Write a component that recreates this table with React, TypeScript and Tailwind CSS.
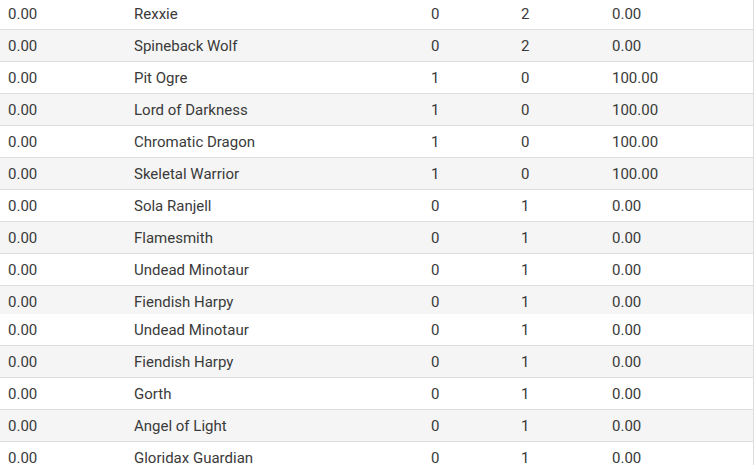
import React from "react";

type Row = [string, string, string, string, string];

const rowsA: Row[] = [
  ["0.00", "Rexxie", "0", "2", "0.00"],
  ["0.00", "Spineback Wolf", "0", "2", "0.00"],
  ["0.00", "Pit Ogre", "1", "0", "100.00"],
  ["0.00", "Lord of Darkness", "1", "0", "100.00"],
  ["0.00", "Chromatic Dragon", "1", "0", "100.00"],
  ["0.00", "Skeletal Warrior", "1", "0", "100.00"],
  ["0.00", "Sola Ranjell", "0", "1", "0.00"],
  ["0.00", "Flamesmith", "0", "1", "0.00"],
  ["0.00", "Undead Minotaur", "0", "1", "0.00"],
];

const cut: Row = ["0.00", "Fiendish Harpy", "0", "1", "0.00"];

const rowsB: Row[] = [
  ["0.00", "Undead Minotaur", "0", "1", "0.00"],
  ["0.00", "Fiendish Harpy", "0", "1", "0.00"],
  ["0.00", "Gorth", "0", "1", "0.00"],
  ["0.00", "Angel of Light", "0", "1", "0.00"],
  ["0.00", "Gloridax Guardian", "0", "1", "0.00"],
];

function Cells({ r }: { r: Row }) {
  return (
    <div className="grid h-[31px] grid-cols-[126px_297px_90px_91px_1fr] items-center pt-[2px]">
      {r.map((c, i) => (
        <div key={i} className="pl-2 leading-none">
          {c}
        </div>
      ))}
    </div>
  );
}

function TableRow({ r, shaded }: { r: Row; shaded: boolean }) {
  return (
    <div className={`border-b border-[#dddddd] ${shaded ? "bg-[#f5f5f5]" : "bg-white"}`}>
      <Cells r={r} />
    </div>
  );
}

export default function App() {
  return (
    <div
      className="h-[465px] w-[756px] overflow-hidden bg-white text-[15px] text-[#3a3a3a]"
      style={{ fontFamily: "Roboto, 'Liberation Sans', sans-serif" }}
    >
      <div className="-mt-[2px] w-[754px] border-r border-[#dddddd]">
        {rowsA.map((r, i) => (
          <TableRow key={"a" + i} r={r} shaded={i % 2 === 1} />
        ))}
        <div className="h-[28px] overflow-hidden bg-[#f5f5f5]">
          <Cells r={cut} />
        </div>
        {rowsB.map((r, i) => (
          <TableRow key={"b" + i} r={r} shaded={i % 2 === 1} />
        ))}
      </div>
    </div>
  );
}
